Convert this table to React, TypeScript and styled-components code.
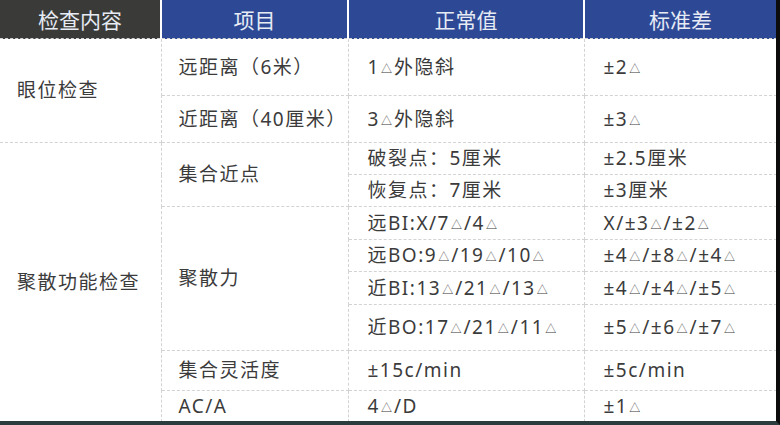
import React from 'react'
import styled, { createGlobalStyle } from 'styled-components'

const GlobalStyle = createGlobalStyle`
  html, body {
    margin: 0;
    padding: 0;
    background: #ffffff;
  }
  body {
    font-family: "Noto Sans", "Noto Sans CJK SC", sans-serif;
  }
`

const Frame = styled.div`
  width: 780px;
  height: 425px;
  box-sizing: border-box;
  overflow: hidden;
  background: #ffffff;
  border-right: 4px solid #0c0c0c;
  border-bottom: 4px solid #2c3b3e;
`

const Table = styled.table`
  width: 776px;
  table-layout: fixed;
  border-collapse: collapse;
  color: #3b3b3b;
`

const HeadCell = styled.th<{ $dark?: boolean }>`
  height: 38px;
  padding: 0;
  font-size: 21px;
  font-weight: 400;
  color: #e6ebf4;
  text-align: center;
  background: ${p => (p.$dark ? '#3a3a39' : '#2d4996')};
  border-left: 2px solid #ffffff;

  &:first-child {
    border-left: none;
  }
`

const Row = styled.tr<{ $h: number }>`
  height: ${p => p.$h}px;
`

const Cell = styled.td<{ $pad?: number }>`
  padding: 0 0 0 ${p => p.$pad ?? 19}px;
  font-size: 19px;
  line-height: 1;
  letter-spacing: 1.5px;
  vertical-align: middle;
  white-space: nowrap;
  border: 1px dashed #d3d3d3;

  &:first-child {
    border-left: none;
  }
`

const Tri = styled.span`
  font-family: "Noto Sans CJK SC", sans-serif;
  font-size: 11px;
  letter-spacing: 0;
  margin: 0 2px 0 1px;
  vertical-align: 1px;
`

const t = (text: string) =>
  text.split('△').map((part, i, arr) => (
    <React.Fragment key={i}>
      {part}
      {i < arr.length - 1 && <Tri>△</Tri>}
    </React.Fragment>
  ))

export default function App() {
  return (
    <Frame>
      <GlobalStyle />
      <Table>
        <colgroup>
          <col style={{ width: 161 }} />
          <col style={{ width: 187 }} />
          <col style={{ width: 236 }} />
          <col style={{ width: 192 }} />
        </colgroup>
        <thead>
          <tr>
            <HeadCell $dark>检查内容</HeadCell>
            <HeadCell>项目</HeadCell>
            <HeadCell>正常值</HeadCell>
            <HeadCell>标准差</HeadCell>
          </tr>
        </thead>
        <tbody>
          <Row $h={57}>
            <Cell rowSpan={2} $pad={17}>眼位检查</Cell>
            <Cell $pad={17}>远距离（6米）</Cell>
            <Cell>{t('1△外隐斜')}</Cell>
            <Cell>{t('±2△')}</Cell>
          </Row>
          <Row $h={47}>
            <Cell $pad={17}>近距离（40厘米）</Cell>
            <Cell>{t('3△外隐斜')}</Cell>
            <Cell>{t('±3△')}</Cell>
          </Row>
          <Row $h={32}>
            <Cell rowSpan={8} $pad={17}>聚散功能检查</Cell>
            <Cell rowSpan={2} $pad={17}>集合近点</Cell>
            <Cell>破裂点：5厘米</Cell>
            <Cell>±2.5厘米</Cell>
          </Row>
          <Row $h={32}>
            <Cell>恢复点：7厘米</Cell>
            <Cell>±3厘米</Cell>
          </Row>
          <Row $h={33}>
            <Cell rowSpan={4} $pad={17}>聚散力</Cell>
            <Cell>{t('远BI:X/7△/4△')}</Cell>
            <Cell>{t('X/±3△/±2△')}</Cell>
          </Row>
          <Row $h={32}>
            <Cell>{t('远BO:9△/19△/10△')}</Cell>
            <Cell>{t('±4△/±8△/±4△')}</Cell>
          </Row>
          <Row $h={33}>
            <Cell>{t('近BI:13△/21△/13△')}</Cell>
            <Cell>{t('±4△/±4△/±5△')}</Cell>
          </Row>
          <Row $h={46}>
            <Cell>{t('近BO:17△/21△/11△')}</Cell>
            <Cell>{t('±5△/±6△/±7△')}</Cell>
          </Row>
          <Row $h={40}>
            <Cell $pad={17}>集合灵活度</Cell>
            <Cell>±15c/min</Cell>
            <Cell>±5c/min</Cell>
          </Row>
          <Row $h={31}>
            <Cell $pad={17}>AC/A</Cell>
            <Cell>{t('4△/D')}</Cell>
            <Cell>{t('±1△')}</Cell>
          </Row>
        </tbody>
      </Table>
    </Frame>
  )
}
